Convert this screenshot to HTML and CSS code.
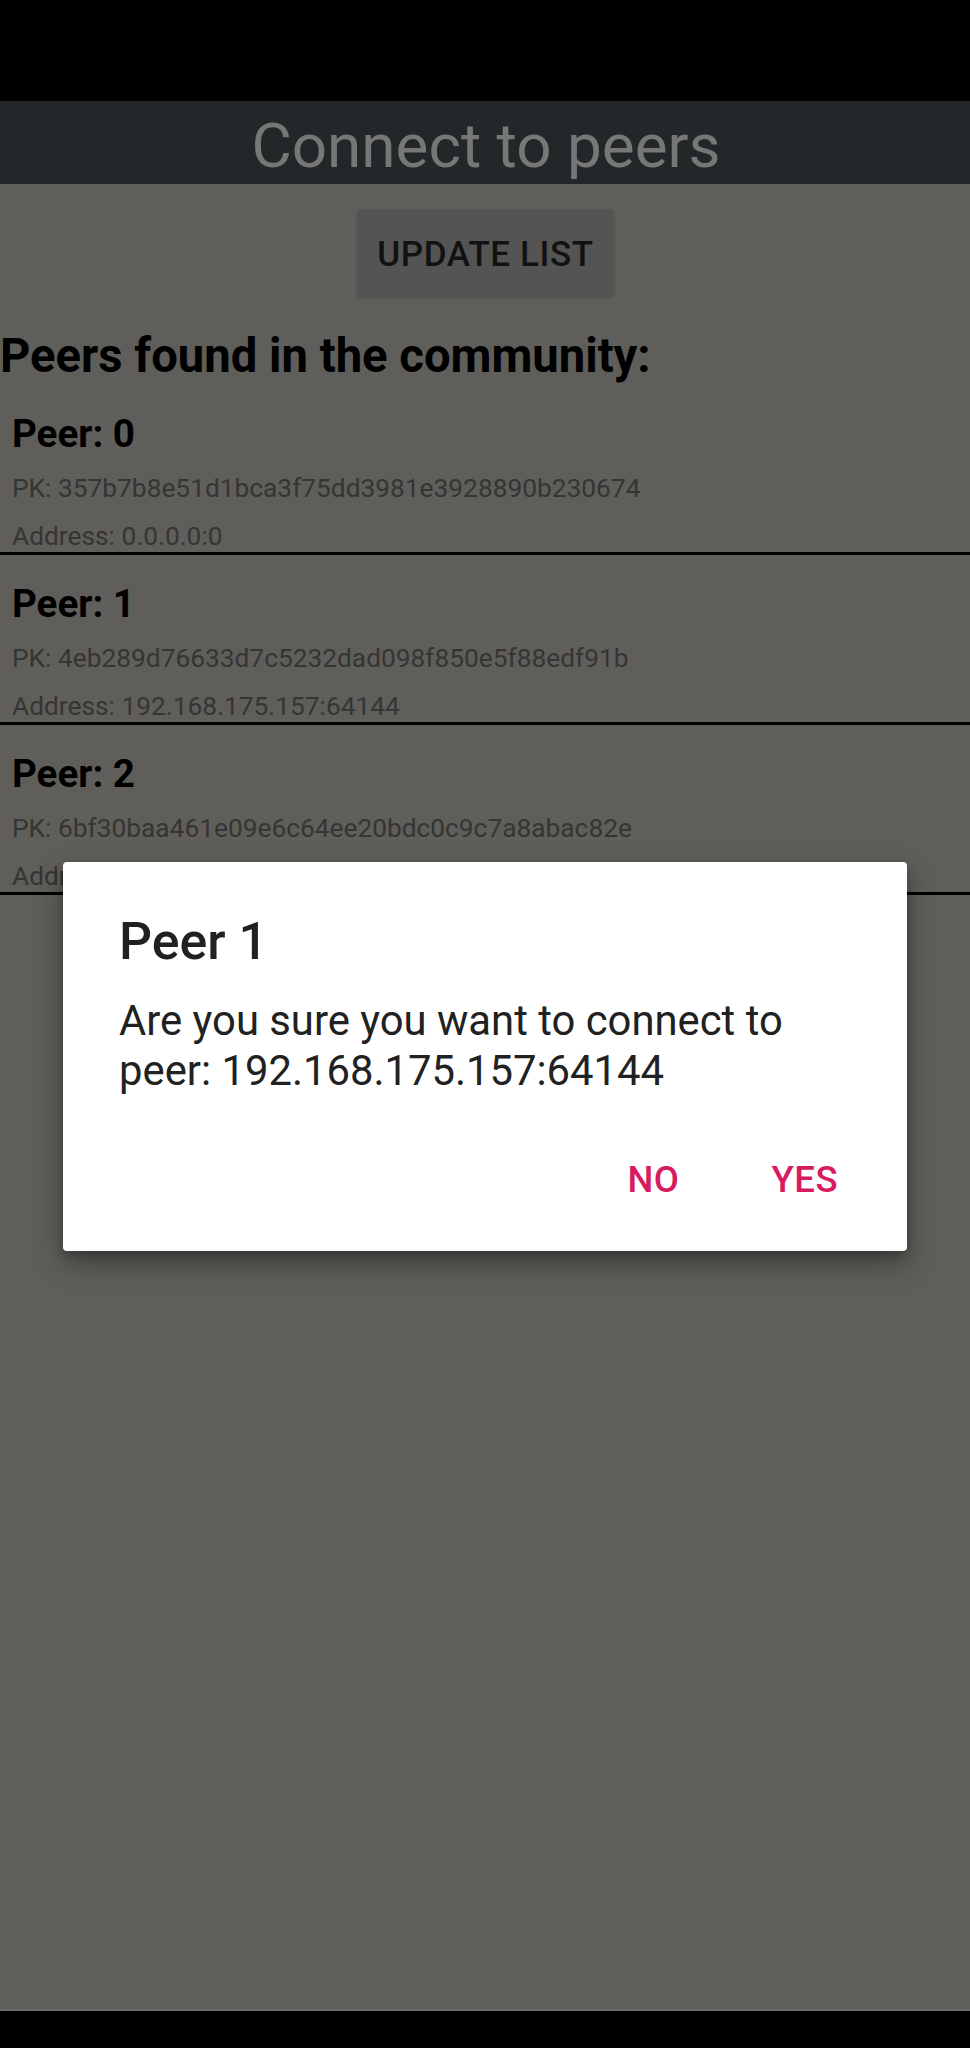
FILE: index.html
```html
<!DOCTYPE html>
<html lang="en">
<head>
<meta charset="utf-8">
<title>Connect to peers</title>
<link rel="stylesheet" href="styles.css">
</head>
<body>
<div class="screen">
  <div class="status-bar"></div>
  <header class="app-bar">
    <h1 class="app-title">Connect to peers</h1>
  </header>
  <main class="content">
    <div class="actions">
      <button class="update-btn">UPDATE LIST</button>
    </div>
    <h2 class="section-title">Peers found in the community:</h2>
    <ul class="peer-list">
      <li class="peer">
        <div class="peer-name">Peer: 0</div>
        <div class="peer-meta">PK: 357b7b8e51d1bca3f75dd3981e3928890b230674</div>
        <div class="peer-meta">Address: 0.0.0.0:0</div>
      </li>
      <li class="peer">
        <div class="peer-name">Peer: 1</div>
        <div class="peer-meta">PK: 4eb289d76633d7c5232dad098f850e5f88edf91b</div>
        <div class="peer-meta">Address: 192.168.175.157:64144</div>
      </li>
      <li class="peer">
        <div class="peer-name">Peer: 2</div>
        <div class="peer-meta">PK: 6bf30baa461e09e6c64ee20bdc0c9c7a8abac82e</div>
        <div class="peer-meta">Address: 192.168.175.157:64144</div>
      </li>
    </ul>
  </main>
  <div class="nav-bar"></div>

  <div class="dialog" role="dialog">
    <div class="dialog-title">Peer 1</div>
    <div class="dialog-body">Are you sure you want to connect to peer: 192.168.175.157:64144</div>
    <div class="dialog-actions">
      <button class="dialog-btn">NO</button>
      <button class="dialog-btn">YES</button>
    </div>
  </div>
</div>
</body>
</html>
```

FILE: styles.css
```css
* { box-sizing: border-box; }

html, body {
  margin: 0;
  padding: 0;
  background: #000;
}

body {
  font-family: Roboto, "Noto Sans", "Liberation Sans", sans-serif;
}

.screen {
  position: relative;
  width: 970px;
  height: 2048px;
  display: flex;
  flex-direction: column;
  background: #5f5e5a;
  overflow: hidden;
}

.status-bar {
  height: 101px;
  background: #000;
  flex: none;
}

.app-bar {
  height: 83px;
  flex: none;
  background: #222829;
  padding-top: 9px;
}

.app-title {
  margin: 0;
  font-size: 62px;
  line-height: 72px;
  font-weight: 400;
  color: #777776;
  text-align: center;
  padding-left: 2px;
}

.content {
  flex: 1;
  display: flex;
  flex-direction: column;
  border-bottom: 2px solid #6b6a66;
}

.actions {
  display: flex;
  justify-content: center;
  padding-top: 25px;
}

.update-btn {
  width: 257px;
  height: 87px;
  border: none;
  border-radius: 4px;
  background: #545454;
  box-shadow: 0 2px 3px rgba(0,0,0,0.12);
  font-family: Roboto, "Noto Sans", sans-serif;
  font-size: 35px;
  font-weight: 500;
  color: #121212;
  letter-spacing: 0.6px;
  padding: 3px 0 0 0;
  margin-left: 1px;
}

.section-title {
  margin: 34px 0 2px 0;
  font-size: 47.2px;
  line-height: 53px;
  font-weight: 700;
  color: #000;
}

.peer-list {
  list-style: none;
  margin: 0;
  padding: 0;
}

.peer {
  height: 170px;
  padding: 27px 10px 0 12px;
  border-bottom: 3px solid #000;
  display: flex;
  flex-direction: column;
  gap: 18px;
}

.peer-name {
  font-size: 38.6px;
  line-height: 43px;
  font-weight: 700;
  color: #000;
}

.peer-meta {
  font-size: 26.3px;
  line-height: 30px;
  color: #353533;
  white-space: nowrap;
}

.nav-bar {
  height: 37px;
  flex: none;
  background: #000;
}

.dialog {
  position: absolute;
  left: 63px;
  top: 862px;
  width: 844px;
  height: 389px;
  background: #fff;
  border-radius: 4px;
  box-shadow: 0 12px 28px rgba(0,0,0,0.35), 0 4px 10px rgba(0,0,0,0.2);
  padding: 51px 55px 0 56px;
}

.dialog-title {
  font-size: 51.8px;
  line-height: 58px;
  font-weight: 500;
  color: #212121;
}

.dialog-body {
  margin-top: 25px;
  font-size: 41.8px;
  line-height: 50px;
  color: #212121;
}

.dialog-actions {
  display: flex;
  justify-content: flex-end;
  gap: 52px;
  margin-top: 36px;
  margin-right: -6px;
}

.dialog-btn {
  height: 96px;
  border: none;
  background: transparent;
  padding: 0 20px;
  font-family: Roboto, "Noto Sans", sans-serif;
  font-size: 36.5px;
  line-height: 40px;
  font-weight: 500;
  color: #d81b60;
  letter-spacing: 0.5px;
}
```
